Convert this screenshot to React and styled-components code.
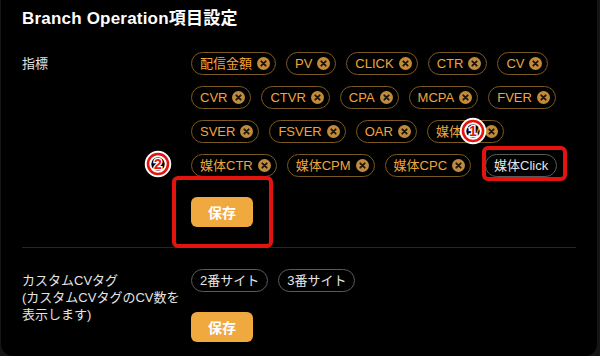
import React from 'react';
import styled, { createGlobalStyle } from 'styled-components';

const GlobalStyle = createGlobalStyle`
    html, body {
        margin: 0;
        background: #151515;
    }
    body {
        font-family: "Liberation Sans", "Noto Sans CJK JP", sans-serif;
        -webkit-font-smoothing: antialiased;
    }
`

const Panel = styled.div`
    position: relative;
    box-sizing: border-box;
    height: 356px;
    margin: 0 3px 0 1px;
    padding: 7px 21px 0 21px;
    background: #000;
    border-radius: 0 0 12px 12px;
    overflow: hidden;
`

const Title = styled.h1`
    margin: 0;
    font-size: 17px;
    line-height: 24px;
    font-weight: 700;
    letter-spacing: 0.2px;
    color: #fff;
`

const Section = styled.section`
    display: grid;
    grid-template-columns: 169px 1fr;
    padding: 21px 0 20px;
    border-bottom: ${p => (p.$divider ? '1px solid #262626' : 'none')};
`

const Label = styled.div`
    padding-top: 3px;
    font-size: 13px;
    line-height: 17px;
    color: #e4e4e4;
`

const Field = styled.div`
    display: flex;
    flex-direction: column;
    align-items: flex-start;
    gap: 20px;
`

const Tags = styled.div`
    display: flex;
    flex-wrap: wrap;
    row-gap: 11px;
    column-gap: 10px;
`

const Tag = styled.span`
    box-sizing: border-box;
    display: inline-flex;
    align-items: center;
    gap: 5px;
    height: 23px;
    padding: 0 ${p => (p.$muted ? '8px' : '5px')} 0 8px;
    margin-left: ${p => (p.$shift ? '4px' : '0')};
    border: 1px solid ${p => (p.$muted ? '#5a5a5a' : '#7a5a20')};
    border-radius: 12px;
    font-size: 13px;
    line-height: 21px;
    white-space: nowrap;
    color: ${p => (p.$muted ? '#e6e6e6' : '#f0a53a')};
`

const SaveButton = styled.button`
    width: 62px;
    height: 30px;
    padding: 0;
    border: none;
    border-radius: 6px;
    background: #f0a93f;
    color: #fff;
    font-family: inherit;
    font-size: 14px;
    font-weight: 700;
`

const RedBox = styled.div`
    position: absolute;
    box-sizing: border-box;
    border: 4px solid #e3140f;
    border-radius: 6px;
    pointer-events: none;
`

const Marker = styled.svg`
    position: absolute;
    pointer-events: none;
`

function RemoveIcon() {
    return (
        <svg width="13" height="13" viewBox="0 0 13 13">
            <circle cx="6.5" cy="6.5" r="6.5" fill="#c08b3c" />
            <path d="M4.3 4.3 L8.7 8.7 M8.7 4.3 L4.3 8.7" stroke="#1c1408" strokeWidth="1.8" strokeLinecap="round" />
        </svg>
    );
}

function Number({ n, x, y }) {
    return (
        <Marker width="28" height="28" viewBox="0 0 28 28" style={{ left: x - 14, top: y - 14 }}>
            <circle cx="14" cy="14" r="10" fill="none" stroke="#fff" strokeWidth="6.5" />
            <circle cx="14" cy="14" r="10" fill="none" stroke="#e3140f" strokeWidth="2.6" />
            <text x="14" y="19" textAnchor="middle" fontSize="14" fontWeight="700"
                fontFamily="Liberation Sans, sans-serif" fill="#e3140f" stroke="#fff"
                strokeWidth="2.6" paintOrder="stroke">{n}</text>
        </Marker>
    );
}

const metrics = [
    "配信金額", "PV", "CLICK", "CTR", "CV",
    "CVR", "CTVR", "CPA", "MCPA", "FVER",
    "SVER", "FSVER", "OAR", "媒体CV",
    "媒体CTR", "媒体CPM", "媒体CPC",
];

const sites = ["2番サイト", "3番サイト"];

export default function App() {
    return (
        <>
            <GlobalStyle />
            <Panel>
                <Title>Branch Operation項目設定</Title>

                <Section $divider>
                    <Label>指標</Label>
                    <Field>
                        <Tags>
                            {metrics.map((m) => (
                                <Tag key={m}>{m}<RemoveIcon /></Tag>
                            ))}
                            <Tag $muted $shift>媒体Click</Tag>
                        </Tags>
                        <SaveButton>保存</SaveButton>
                    </Field>
                </Section>

                <Section>
                    <Label>
                        カスタムCVタグ<br />
                        (カスタムCVタグのCV数を<br />
                        表示します)
                    </Label>
                    <Field>
                        <Tags>
                            {sites.map((s) => <Tag key={s} $muted>{s}</Tag>)}
                        </Tags>
                        <SaveButton>保存</SaveButton>
                    </Field>
                </Section>

                {/* 注釈 */}
                <RedBox style={{ left: 481, top: 146, width: 85, height: 35 }} />
                <RedBox style={{ left: 171, top: 176, width: 101, height: 72 }} />
                <Number n="1" x={472} y={131} />
                <Number n="2" x={157} y={164} />
            </Panel>
        </>
    );
}
